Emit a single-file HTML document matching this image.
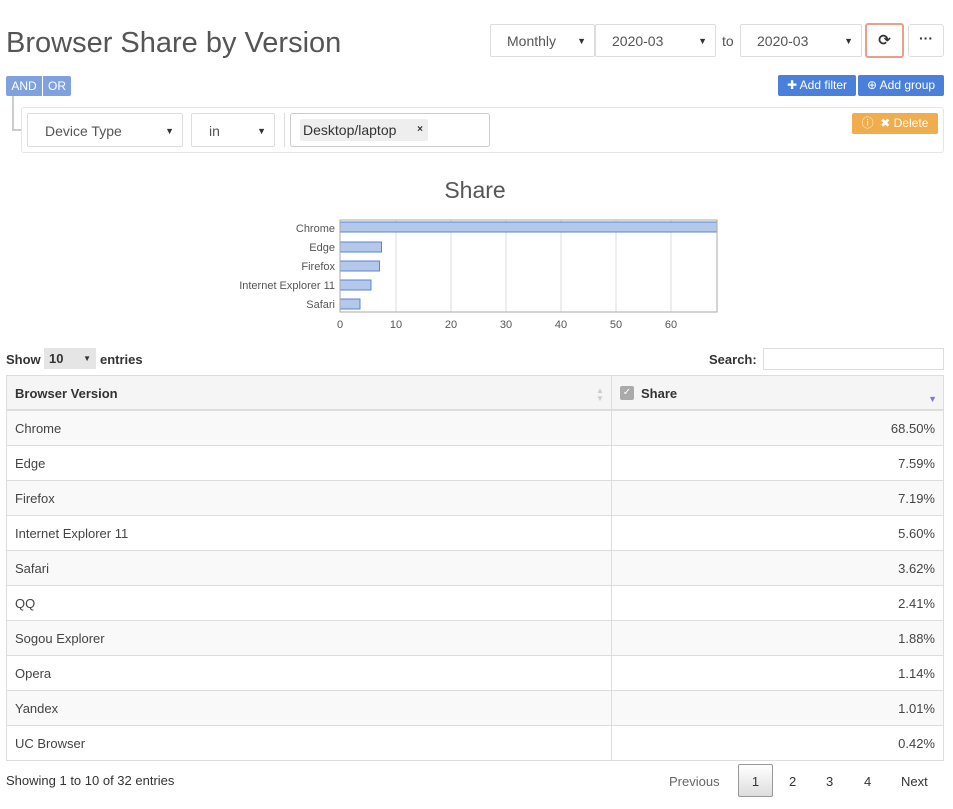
<!DOCTYPE html>
<html><head><meta charset="utf-8"><style>
*{box-sizing:border-box}
body{margin:0;width:953px;height:809px;background:#fff;font-family:"Liberation Sans","DejaVu Sans",sans-serif;color:#333;position:relative;overflow:hidden;font-size:13px}
.a{position:absolute}
.sel{position:absolute;border:1px solid #ddd;border-radius:2px;background:#fff;font-size:14px;color:#555;line-height:33px}
.sel .c{position:absolute;right:8px;top:0;font-size:9px;color:#333}
.btn{position:absolute;color:#fff;font-size:12px;border-radius:2px;line-height:21px;text-align:center}
.row{position:absolute;left:6px;width:938px;height:35px;border-bottom:1px solid #ddd;border-left:1px solid #ddd;border-right:1px solid #ddd;font-size:13px;line-height:35px;color:#444}
.row span{position:absolute}
.row .l{left:8px}.row .r{right:8px}
.row .d{position:absolute;left:604px;top:0;bottom:0;border-left:1px solid #ddd}
.g{background:#f9f9f9}
</style></head><body>
<div class="a" style="left:6px;top:27px;font-size:29px;color:#555;font-weight:300">Browser Share by Version</div>

<div class="sel" style="left:490px;top:24px;width:105px;height:33px;padding-left:16px">Monthly<span class="c">▼</span></div>
<div class="sel" style="left:595px;top:24px;width:121px;height:33px;padding-left:16px">2020-03<span class="c">▼</span></div>
<div class="a" style="left:722px;top:33px;font-size:14px;color:#555">to</div>
<div class="sel" style="left:740px;top:24px;width:122px;height:33px;padding-left:16px">2020-03<span class="c">▼</span></div>
<div class="a" style="left:865px;top:23px;width:39px;height:35px;border:2px solid #e8a08a;border-radius:3px;text-align:center;line-height:31px;font-size:15px;font-weight:bold;color:#333">⟳</div>
<div class="a" style="left:908px;top:24px;width:36px;height:33px;border:1px solid #ddd;border-radius:3px;text-align:center;line-height:26px;font-size:14px;font-weight:bold">···</div>

<div class="btn" style="left:6px;top:76px;width:36px;height:20px;background:#7fa1e0;border-radius:2px 0 0 2px;line-height:20px">AND</div>
<div class="btn" style="left:43px;top:76px;width:28px;height:20px;background:#7fa1e0;border-radius:0 2px 2px 0;line-height:20px">OR</div>
<div class="a" style="left:12px;top:96px;width:10px;height:35px;border-left:2px solid #ccc;border-bottom:2px solid #ccc"></div>

<div class="btn" style="left:778px;top:75px;width:78px;height:21px;background:#4a80d9">✚ Add filter</div>
<div class="btn" style="left:858px;top:75px;width:86px;height:21px;background:#4a80d9">⊕ Add group</div>

<div class="a" style="left:21px;top:107px;width:923px;height:46px;border:1px solid #e5e5e5;border-radius:3px"></div>
<div class="sel" style="left:27px;top:113px;width:156px;height:34px;padding-left:17px;line-height:35px">Device Type<span class="c">▼</span></div>
<div class="sel" style="left:191px;top:113px;width:84px;height:34px;padding-left:17px;line-height:35px">in<span class="c">▼</span></div>
<div class="a" style="left:284px;top:113px;height:34px;border-left:1px solid #ddd"></div>
<div class="a" style="left:290px;top:113px;width:200px;height:34px;border:1px solid #ccc;border-radius:3px"></div>
<div class="a" style="left:300px;top:119px;width:128px;height:22px;background:#eee;border-radius:2px;font-size:14px;line-height:22px;padding-left:3px;color:#333">Desktop/laptop <span style="position:absolute;right:5px;font-size:10px;font-weight:bold">×</span></div>
<div class="btn" style="left:852px;top:113px;width:86px;height:21px;background:#f0ad4e">ⓘ &nbsp;✖ Delete</div>

<div class="a" style="left:0;width:953px;top:177px;text-align:center;font-size:23px;color:#555;font-weight:300"><span style="margin-left:-3px">Share</span></div>
<svg class="a" style="left:0;top:210px" width="953" height="125">
<g stroke="#ddd"><line x1="396" y1="10" x2="396" y2="102"/><line x1="451" y1="10" x2="451" y2="102"/><line x1="506" y1="10" x2="506" y2="102"/><line x1="561" y1="10" x2="561" y2="102"/><line x1="616" y1="10" x2="616" y2="102"/><line x1="671" y1="10" x2="671" y2="102"/></g>
<g fill="#b3c8ea" stroke="#5a86d0"><rect x="340" y="12" width="377" height="10"/><rect x="340" y="32" width="41.5" height="10"/><rect x="340" y="51" width="39.5" height="10"/><rect x="340" y="70" width="31" height="10"/><rect x="340" y="89" width="20" height="10"/></g>
<rect x="340" y="10" width="377" height="92" fill="none" stroke="#aaa"/>
<g font-size="11" fill="#555" text-anchor="end" font-family="Liberation Sans,sans-serif"><text x="335" y="22">Chrome</text><text x="335" y="41">Edge</text><text x="335" y="60">Firefox</text><text x="335" y="79">Internet Explorer 11</text><text x="335" y="98">Safari</text></g>
<g font-size="11" fill="#555" text-anchor="middle" font-family="Liberation Sans,sans-serif"><text x="340" y="118">0</text><text x="396" y="118">10</text><text x="451" y="118">20</text><text x="506" y="118">30</text><text x="561" y="118">40</text><text x="616" y="118">50</text><text x="671" y="118">60</text></g>
</svg>

<div class="a" style="left:6px;top:352px;font-size:13px;font-weight:bold">Show</div>
<div class="a" style="left:44px;top:348px;width:52px;height:21px;background:#e5e5e5;font-size:13px;font-weight:bold;line-height:22px;padding-left:5px">10<span style="position:absolute;right:5px;font-size:8px">▼</span></div>
<div class="a" style="left:100px;top:352px;font-size:13px;font-weight:bold">entries</div>
<div class="a" style="left:709px;top:352px;font-size:13px;font-weight:bold">Search:</div>
<div class="a" style="left:763px;top:348px;width:181px;height:22px;border:1px solid #ddd"></div>

<div class="row" style="top:375px;height:36px;border-top:1px solid #ddd;border-bottom:2px solid #ddd;background:#f5f5f5;font-weight:bold;line-height:35px;color:#333"><span class="l">Browser Version</span><span style="left:589px;font-size:8px;color:#ccc;line-height:8px;top:11px">▲<br>▼</span><div class="d"></div><span style="left:613px;top:10px;width:14px;height:14px;background:#aaa;border-radius:2px;color:#fff;font-size:10px;line-height:14px;text-align:center">✓</span><span style="left:634px">Share</span><span style="right:6px;top:6px;font-size:9px;color:#7b7bd8">▼</span></div>
<div class="row g" style="top:411px"><span class="l">Chrome</span><div class="d"></div><span class="r">68.50%</span></div>
<div class="row" style="top:446px"><span class="l">Edge</span><div class="d"></div><span class="r">7.59%</span></div>
<div class="row g" style="top:481px"><span class="l">Firefox</span><div class="d"></div><span class="r">7.19%</span></div>
<div class="row" style="top:516px"><span class="l">Internet Explorer 11</span><div class="d"></div><span class="r">5.60%</span></div>
<div class="row g" style="top:551px"><span class="l">Safari</span><div class="d"></div><span class="r">3.62%</span></div>
<div class="row" style="top:586px"><span class="l">QQ</span><div class="d"></div><span class="r">2.41%</span></div>
<div class="row g" style="top:621px"><span class="l">Sogou Explorer</span><div class="d"></div><span class="r">1.88%</span></div>
<div class="row" style="top:656px"><span class="l">Opera</span><div class="d"></div><span class="r">1.14%</span></div>
<div class="row g" style="top:691px"><span class="l">Yandex</span><div class="d"></div><span class="r">1.01%</span></div>
<div class="row" style="top:726px"><span class="l">UC Browser</span><div class="d"></div><span class="r">0.42%</span></div>

<div class="a" style="left:6px;top:773px;font-size:13px">Showing 1 to 10 of 32 entries</div>
<div class="a" style="left:669px;top:774px;font-size:13px;color:#666">Previous</div>
<div class="a" style="left:738px;top:764px;width:35px;height:33px;border:1px solid #999;border-radius:2px;background:linear-gradient(#fff,#ddd);text-align:center;line-height:33px;font-size:13px">1</div>
<div class="a" style="left:789px;top:774px;font-size:13px">2</div>
<div class="a" style="left:826px;top:774px;font-size:13px">3</div>
<div class="a" style="left:864px;top:774px;font-size:13px">4</div>
<div class="a" style="left:901px;top:774px;font-size:13px">Next</div>
</body></html>
